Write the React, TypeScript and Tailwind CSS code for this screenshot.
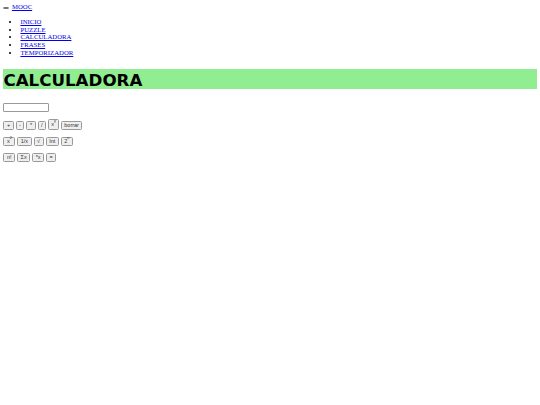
import React from "react";

const btn =
  "inline-flex items-center justify-center h-[9px] px-[2.5px] bg-[#efefef] border-[0.6px] border-[#999] rounded-[1.5px] text-[5.5px] leading-none text-[#333] font-['Liberation_Sans',Arial,sans-serif]";

function Sup({ b, s }: { b: string; s: string }) {
  return (
    <span className="inline-flex items-start">
      {b}
      <span className="text-[3.8px] -mt-[1.5px] leading-none">{s}</span>
    </span>
  );
}

export default function App() {
  return (
    <div className="bg-white w-[540px] h-[405px] p-[3.4px] font-['Liberation_Serif','Times_New_Roman',serif] text-[6.75px] leading-[7.7px] text-black">
      <div className="flex items-center h-[7.7px]">
        <button className="w-[6px] h-[2.5px] bg-[#efefef] border-[0.5px] border-[#767676] rounded-[1px] mr-[2.5px] mt-[2px]"></button>
        <a href="#" className="text-[#0000ee] underline">MOOC</a>
      </div>
      <ul className="list-disc pl-[17px] my-[6.75px]">
        <li><a href="#" className="text-[#0000ee] underline">INICIO</a></li>
        <li><a href="#" className="text-[#0000ee] underline">PUZZLE</a></li>
        <li><a href="#" className="text-[#0000ee] underline">CALCULADORA</a></li>
        <li><a href="#" className="text-[#0000ee] underline">FRASES</a></li>
        <li><a href="#" className="text-[#0000ee] underline">TEMPORIZADOR</a></li>
      </ul>
      <h1 className="mt-[13px] h-[20px] flex items-center bg-[#90ee90] pt-[2px] font-['DejaVu_Sans',sans-serif] font-bold text-[16.7px] leading-none">
        CALCULADORA
      </h1>
      <div className="mt-[14px]">
        <input className="block w-[46px] h-[9px] border-[0.6px] border-[#999] rounded-[1px] bg-white" />
      </div>
      <div className="flex items-end gap-[2px] mt-[7px]">
        <button className={btn}>+</button>
        <button className={btn}>-</button>
        <button className={btn}>*</button>
        <button className={btn}>/</button>
        <button className={btn + " !h-[10.5px] !px-[2px]"}><Sup b="x" s="y" /></button>
        <button className={btn}>borrar</button>
      </div>
      <div className="flex items-end gap-[2px] mt-[7px]">
        <button className={btn + " !h-[9.5px]"}><Sup b="x" s="2" /></button>
        <button className={btn}>1/x</button>
        <button className={btn}>√</button>
        <button className={btn}>Int</button>
        <button className={btn + " !h-[9.5px]"}><Sup b="2" s="n" /></button>
      </div>
      <div className="flex items-end gap-[2px] mt-[7px]">
        <button className={btn}>n!</button>
        <button className={btn}>Σx</button>
        <button className={btn}>*x</button>
        <button className={btn}>=</button>
      </div>
    </div>
  );
}
